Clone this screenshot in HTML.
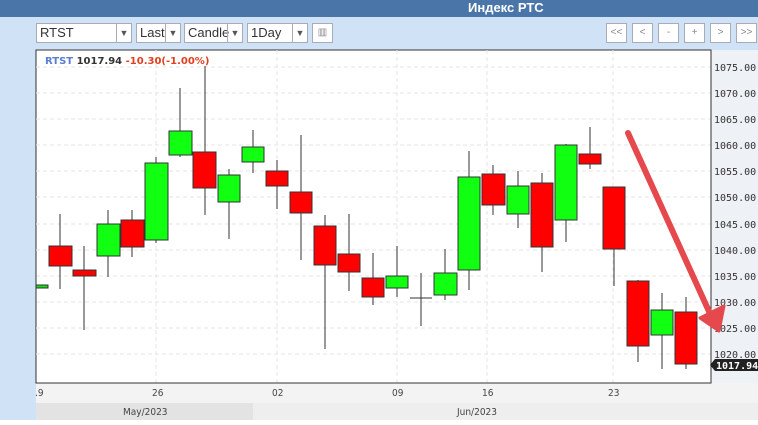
<!DOCTYPE html>
<html><head><meta charset="utf-8"><style>
body{margin:0;width:758px;height:425px;overflow:hidden;background:#fff;font-family:"Liberation Sans",sans-serif;position:relative}
.a{position:absolute}
.top{left:0;top:0;width:758px;height:17px;background:#4a75a8;color:#fff;font-weight:bold;font-size:13px;line-height:15px}
.bg{left:0;top:17px;width:758px;height:403px;background:#cfe2f6}
.sel{position:absolute;top:23px;height:20px;background:#fff;border:1px solid #aab;box-sizing:border-box;font-size:13px;line-height:18px;padding-left:3px;color:#333}
.sel i{position:absolute;right:0;top:0;width:14px;height:18px;border-left:1px solid #aab;font-style:normal;font-size:9px;text-align:center;color:#555}
.btn{position:absolute;top:23px;width:21px;height:20px;background:#fff;border:1px solid #aab;box-sizing:border-box;font-size:10px;line-height:18px;text-align:center;color:#888}
</style></head><body>
<div class="a bg"></div>
<div class="a top"><span style="position:absolute;left:468px;top:0">Индекс РТС</span></div>
<div class="sel" style="left:36px;width:96px">RTST<i>▼</i></div>
<div class="sel" style="left:136px;width:45px">Last<i>▼</i></div>
<div class="sel" style="left:184px;width:59px">Candle<i>▼</i></div>
<div class="sel" style="left:247px;width:61px">1Day<i>▼</i></div>
<div class="btn" style="left:312px">▥</div>
<div class="btn" style="left:606px">&lt;&lt;</div>
<div class="btn" style="left:632px">&lt;</div>
<div class="btn" style="left:658px">-</div>
<div class="btn" style="left:684px">+</div>
<div class="btn" style="left:710px">&gt;</div>
<div class="btn" style="left:736px">&gt;&gt;</div>
<svg class="a" style="left:0;top:0" width="758" height="425" font-family="Liberation Sans, sans-serif">
<rect x="36" y="383" width="722" height="20" fill="#f3f3f3"/>
<rect x="36" y="403" width="217" height="17" fill="#e3e3e3"/>
<rect x="253" y="403" width="505" height="17" fill="#eeeeee"/>
<rect x="711" y="50" width="47" height="333" fill="#eef2f6"/>
<rect x="36" y="50" width="675" height="333" fill="#fff" stroke="#333" stroke-width="1"/>
<g stroke="#e6e6e6" stroke-dasharray="4,3" stroke-width="1">
<line x1="36" x2="711" y1="67" y2="67"/><line x1="36" x2="711" y1="93" y2="93"/><line x1="36" x2="711" y1="119" y2="119"/><line x1="36" x2="711" y1="145" y2="145"/><line x1="36" x2="711" y1="171" y2="171"/><line x1="36" x2="711" y1="197" y2="197"/><line x1="36" x2="711" y1="224" y2="224"/><line x1="36" x2="711" y1="250" y2="250"/><line x1="36" x2="711" y1="276" y2="276"/><line x1="36" x2="711" y1="302" y2="302"/><line x1="36" x2="711" y1="328" y2="328"/><line x1="36" x2="711" y1="354" y2="354"/>
<line x1="156" x2="156" y1="50" y2="383"/><line x1="277" x2="277" y1="50" y2="383"/><line x1="397" x2="397" y1="50" y2="383"/><line x1="487" x2="487" y1="50" y2="383"/><line x1="613" x2="613" y1="50" y2="383"/>
</g>
<line x1="36" y1="383" x2="711" y2="383" stroke="#333"/>
<line x1="711" y1="50" x2="711" y2="383" stroke="#333"/>
<g font-size="10" fill="#333" font-family="DejaVu Sans Mono, monospace">
<text x="714" y="71">1075.00</text><text x="714" y="97">1070.00</text><text x="714" y="123">1065.00</text><text x="714" y="149">1060.00</text><text x="714" y="175">1055.00</text><text x="714" y="201">1050.00</text><text x="714" y="228">1045.00</text><text x="714" y="254">1040.00</text><text x="714" y="280">1035.00</text><text x="714" y="306">1030.00</text><text x="714" y="332">1025.00</text><text x="714" y="358">1020.00</text>
</g>
<path d="M710 365 L715 359 H758 V371 H715 Z" fill="#222"/>
<text x="716" y="369" font-size="10" fill="#fff" font-family="DejaVu Sans Mono, monospace" font-weight="bold">1017.94</text>
<g font-size="10" fill="#444" font-family="DejaVu Sans Condensed, sans-serif">
<text x="35" y="396">.9</text><text x="152" y="396">26</text><text x="272" y="396">02</text><text x="392" y="396">09</text><text x="482" y="396">16</text><text x="608" y="396">23</text>
<text x="123" y="415">May/2023</text><text x="457" y="415">Jun/2023</text>
</g>
<text x="45" y="64" font-size="10" font-weight="bold" font-family="DejaVu Sans, sans-serif"><tspan fill="#5a7fd0">RTST</tspan> <tspan fill="#333">1017.94</tspan> <tspan fill="#e04020">-10.30(-1.00%)</tspan></text>
<g stroke="#333" stroke-width="1">
<line x1="36" x2="36" y1="252" y2="308"/><rect x="36" y="285" width="12" height="3" fill="#1d1"/>
<line x1="60" x2="60" y1="214" y2="289"/><rect x="49" y="246" width="23" height="20" fill="#f00"/>
<line x1="84" x2="84" y1="246" y2="330"/><rect x="73" y="270" width="23" height="6" fill="#f00"/>
<line x1="108" x2="108" y1="210" y2="277"/><rect x="97" y="224" width="23" height="32" fill="#1f1"/>
<line x1="132" x2="132" y1="210" y2="257"/><rect x="121" y="220" width="23" height="27" fill="#f00"/>
<line x1="156" x2="156" y1="157" y2="243"/><rect x="145" y="163" width="23" height="77" fill="#1f1"/>
<line x1="180" x2="180" y1="88" y2="157"/><rect x="169" y="131" width="23" height="24" fill="#1f1"/>
<line x1="205" x2="205" y1="66" y2="215"/><rect x="193" y="152" width="23" height="36" fill="#f00"/>
<line x1="229" x2="229" y1="169" y2="239"/><rect x="218" y="175" width="22" height="27" fill="#1f1"/>
<line x1="253" x2="253" y1="130" y2="173"/><rect x="242" y="147" width="22" height="15" fill="#1f1"/>
<line x1="277" x2="277" y1="160" y2="209"/><rect x="266" y="171" width="22" height="15" fill="#f00"/>
<line x1="301" x2="301" y1="135" y2="260"/><rect x="290" y="192" width="22" height="21" fill="#f00"/>
<line x1="325" x2="325" y1="215" y2="349"/><rect x="314" y="226" width="22" height="39" fill="#f00"/>
<line x1="349" x2="349" y1="214" y2="291"/><rect x="338" y="254" width="22" height="18" fill="#f00"/>
<line x1="373" x2="373" y1="253" y2="305"/><rect x="362" y="278" width="22" height="19" fill="#f00"/>
<line x1="397" x2="397" y1="246" y2="297"/><rect x="386" y="276" width="22" height="12" fill="#1f1"/>
<line x1="421" x2="421" y1="273" y2="326"/><line x1="410" x2="432" y1="298" y2="298"/>
<line x1="445" x2="445" y1="249" y2="300"/><rect x="434" y="273" width="23" height="22" fill="#1f1"/>
<line x1="469" x2="469" y1="151" y2="290"/><rect x="458" y="177" width="22" height="93" fill="#1f1"/>
<line x1="493" x2="493" y1="165" y2="215"/><rect x="482" y="174" width="23" height="31" fill="#f00"/>
<line x1="518" x2="518" y1="171" y2="228"/><rect x="507" y="186" width="22" height="28" fill="#1f1"/>
<line x1="542" x2="542" y1="173" y2="272"/><rect x="531" y="183" width="22" height="64" fill="#f00"/>
<line x1="566" x2="566" y1="144" y2="242"/><rect x="555" y="145" width="22" height="75" fill="#1f1"/>
<line x1="590" x2="590" y1="127" y2="169"/><rect x="579" y="154" width="22" height="10" fill="#f00"/>
<line x1="614" x2="614" y1="187" y2="286"/><rect x="603" y="187" width="22" height="62" fill="#f00"/>
<line x1="638" x2="638" y1="280" y2="362"/><rect x="627" y="281" width="22" height="65" fill="#f00"/>
<line x1="662" x2="662" y1="293" y2="369"/><rect x="651" y="310" width="22" height="25" fill="#1f1"/>
<line x1="686" x2="686" y1="297" y2="369"/><rect x="675" y="312" width="22" height="52" fill="#f00"/>
</g>
<line x1="628" y1="133" x2="712" y2="318" stroke="#e5484d" stroke-width="6" stroke-linecap="round"/>
<path d="M700 318 L719 331 L724 306 Z" fill="#e5484d" stroke="#e5484d" stroke-width="3" stroke-linejoin="round"/>
</svg>
</body></html>
